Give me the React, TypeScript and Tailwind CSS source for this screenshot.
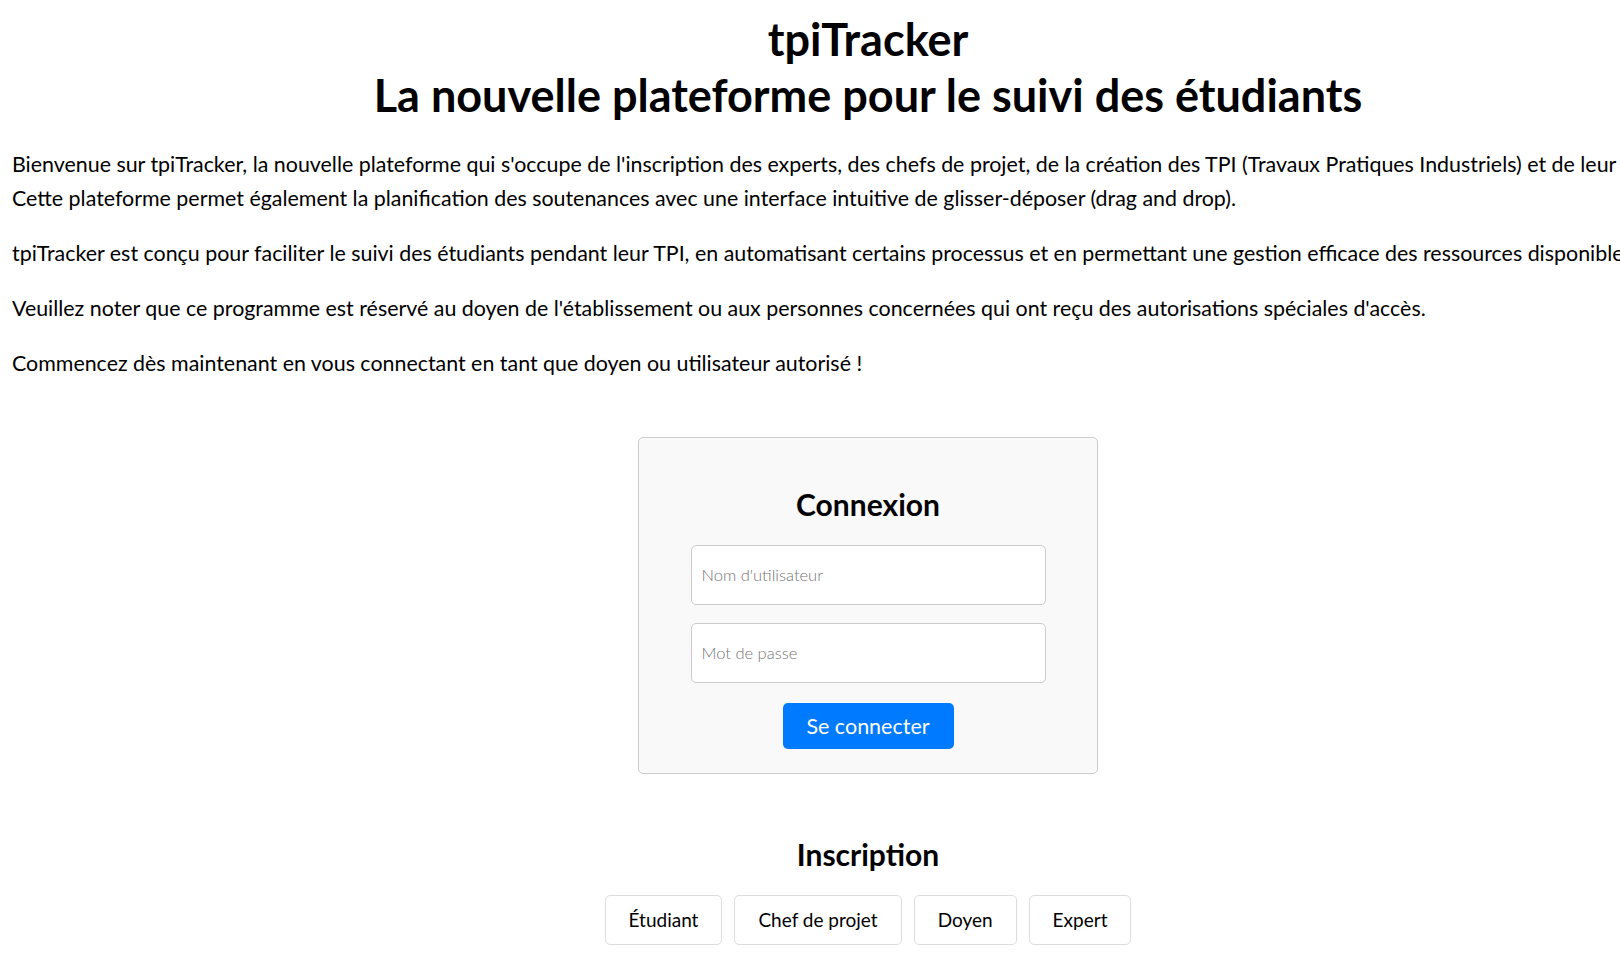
import { useState } from "react";

const roles = ["Étudiant", "Chef de projet", "Doyen", "Expert"];

export default function App() {
  const [username, setUsername] = useState("");
  const [password, setPassword] = useState("");

  return (
    <div className="w-full h-[968px] overflow-hidden bg-white">
      <div className="w-[1736px] text-black font-['Lato','Segoe_UI',sans-serif]">
        {/* Header */}
        <h1 className="pt-[11px] text-center text-[45px] leading-[56px] font-bold">
          tpiTracker
          <br />
          La nouvelle plateforme pour le suivi des étudiants
        </h1>

        {/* Intro */}
        <div className="mt-[24px] px-3 text-[21.4px] leading-[34px] whitespace-nowrap">
          <p>
            Bienvenue sur tpiTracker, la nouvelle plateforme qui s'occupe de l'inscription des experts, des chefs de projet, de la création des TPI (Travaux Pratiques Industriels) et de leur affectation.
            <br />
            Cette plateforme permet également la planification des soutenances avec une interface intuitive de glisser-déposer (drag and drop).
          </p>
          <p className="mt-[21px]">
            tpiTracker est conçu pour faciliter le suivi des étudiants pendant leur TPI, en automatisant certains processus et en permettant une gestion efficace des ressources disponibles.
          </p>
          <p className="mt-[21px]">
            Veuillez noter que ce programme est réservé au doyen de l'établissement ou aux personnes concernées qui ont reçu des autorisations spéciales d'accès.
          </p>
          <p className="mt-[21px]">
            Commencez dès maintenant en vous connectant en tant que doyen ou utilisateur autorisé !
          </p>
        </div>

        {/* Login */}
        <div className="mt-[57px] flex justify-center">
          <form
            onSubmit={(e) => e.preventDefault()}
            className="w-[460px] h-[337px] flex flex-col items-center pt-[48px] bg-[#f9f9f9] border border-[#cccccc] rounded-[5px]"
          >
            <h2 className="text-[30px] leading-[36px] font-bold">Connexion</h2>
            <input
              type="text"
              value={username}
              onChange={(e) => setUsername(e.target.value)}
              placeholder="Nom d'utilisateur"
              className="mt-[23px] w-[355px] h-[60px] px-[10px] bg-white border border-[#cccccc] rounded-[5px] text-[16.5px] font-light placeholder:text-[#757575] outline-none"
            />
            <input
              type="password"
              value={password}
              onChange={(e) => setPassword(e.target.value)}
              placeholder="Mot de passe"
              className="mt-[18px] w-[355px] h-[60px] px-[10px] bg-white border border-[#cccccc] rounded-[5px] text-[16.5px] font-light placeholder:text-[#757575] outline-none"
            />
            <button
              type="submit"
              className="mt-[20px] w-[171px] h-[46px] bg-[#007bff] text-white text-[21.5px] rounded-[5px]"
            >
              Se connecter
            </button>
          </form>
        </div>

        {/* Inscription */}
        <div className="mt-[62px] flex flex-col items-center">
          <h2 className="text-[30px] leading-[36px] font-bold">Inscription</h2>
          <div className="mt-[23px] flex gap-[12px]">
            {roles.map((role) => (
              <button
                key={role}
                className="h-[50px] px-[23px] bg-white border border-[#dddddd] rounded-[5px] text-[19px]"
              >
                {role}
              </button>
            ))}
          </div>
        </div>
      </div>
    </div>
  );
}
